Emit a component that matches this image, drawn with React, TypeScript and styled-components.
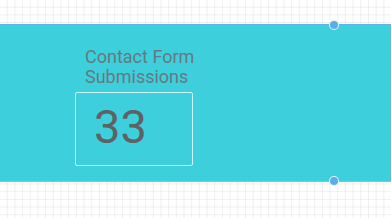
import styled, { createGlobalStyle } from "styled-components";

const Global = createGlobalStyle`
  html, body {
    margin: 0;
    padding: 0;
    background-color: #fff;
    background-image:
      linear-gradient(to right, rgba(0, 0, 0, 0.06) 1px, transparent 1px),
      linear-gradient(to bottom, rgba(0, 0, 0, 0.06) 1px, transparent 1px);
    background-size: 7.7px 7.7px;
    background-position: -1px -1px;
    font-family: Roboto, "Liberation Sans", sans-serif;
  }
`;

const Page = styled.div`
  width: 391px;
  height: 218px;
  padding-top: 24px;
  box-sizing: border-box;
`;

const Band = styled.section`
  position: relative;
  height: 158px;
  background: #3ecfdc;
  border-top: 1px solid #5cb6ec;
  border-bottom: 1px solid #7bc4ec;
  box-sizing: border-box;
  padding: 22px 0 0 75px;
`;

const Handle = styled.span<{ edge: "top" | "bottom" }>`
  position: absolute;
  left: 329px;
  ${({ edge }) => (edge === "top" ? "top: -5px;" : "bottom: -5px;")}
  width: 8px;
  height: 8px;
  border-radius: 50%;
  background: #5aaee8;
  border: 1px solid rgba(255, 255, 255, 0.85);
`;

const Widget = styled.div`
  display: flex;
  flex-direction: column;
  gap: 5px;
`;

const Title = styled.div`
  padding-left: 10px;
  font-size: 18px;
  line-height: 20px;
  color: #657a80;
`;

const Counter = styled.div`
  width: 118px;
  height: 74px;
  box-sizing: border-box;
  border: 1px solid rgba(255, 255, 255, 0.75);
  border-radius: 2px;
  display: flex;
  align-items: center;
  padding: 0 0 6px 18px;
  font-size: 47px;
  color: #5f6264;
`;

export default function App() {
  return (
    <Page>
      <Global />
      <Band>
        <Handle edge="top" />
        <Widget>
          <Title>
            Contact Form
            <br />
            Submissions
          </Title>
          <Counter>33</Counter>
        </Widget>
        <Handle edge="bottom" />
      </Band>
    </Page>
  );
}
